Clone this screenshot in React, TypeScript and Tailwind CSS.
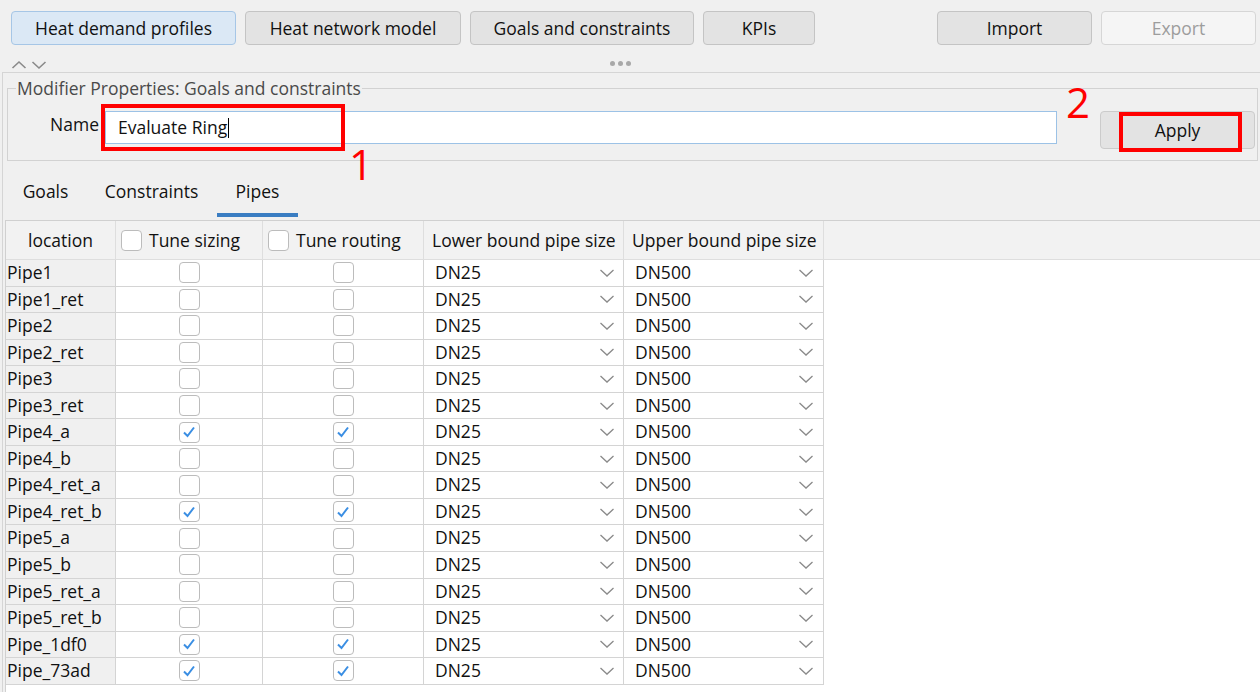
import React from 'react';

type PipeRow = {
  name: string;
  sizing: boolean;
  routing: boolean;
};

const pipes: PipeRow[] = [
  { name: 'Pipe1', sizing: false, routing: false },
  { name: 'Pipe1_ret', sizing: false, routing: false },
  { name: 'Pipe2', sizing: false, routing: false },
  { name: 'Pipe2_ret', sizing: false, routing: false },
  { name: 'Pipe3', sizing: false, routing: false },
  { name: 'Pipe3_ret', sizing: false, routing: false },
  { name: 'Pipe4_a', sizing: true, routing: true },
  { name: 'Pipe4_b', sizing: false, routing: false },
  { name: 'Pipe4_ret_a', sizing: false, routing: false },
  { name: 'Pipe4_ret_b', sizing: true, routing: true },
  { name: 'Pipe5_a', sizing: false, routing: false },
  { name: 'Pipe5_b', sizing: false, routing: false },
  { name: 'Pipe5_ret_a', sizing: false, routing: false },
  { name: 'Pipe5_ret_b', sizing: false, routing: false },
  { name: 'Pipe_1df0', sizing: true, routing: true },
  { name: 'Pipe_73ad', sizing: true, routing: true },
];

const CheckBox = ({ checked }: { checked: boolean }) => (
  <div className="w-[21px] h-[21px] rounded-[4px] border-[1.5px] border-[#bcbcbc] bg-white flex items-center justify-center">
    {checked && (
      <svg width="14" height="14" viewBox="0 0 14 14">
        <polyline points="2,7.5 5.5,11 12,2.5" fill="none" stroke="#3a8ee3" strokeWidth="2" />
      </svg>
    )}
  </div>
);

const Chevron = () => (
  <svg width="16" height="10" viewBox="0 0 16 10">
    <polyline points="1.5,2 8,8 14.5,2" fill="none" stroke="#8a8a8a" strokeWidth="1.3" />
  </svg>
);

const TopButton = ({
  label,
  width,
  selected,
  disabled,
}: {
  label: string;
  width: string;
  selected?: boolean;
  disabled?: boolean;
}) => (
  <button
    className={`${width} h-[34px] rounded-[4px] border text-[17.5px] ${
      selected
        ? 'bg-[#dbe8f5] border-[#a6c6e6] text-[#111]'
        : disabled
        ? 'bg-[#f5f5f5] border-[#d6d6d6] text-[#9d9d9d]'
        : 'bg-[#e3e3e3] border-[#c4c4c4] text-[#111]'
    }`}
  >
    {label}
  </button>
);

const App = () => {
  return (
    <div
      className="w-[1260px] h-[692px] overflow-hidden bg-[#f0f0f0] text-[#111] relative"
      style={{ fontFamily: '"Open Sans", "Noto Sans", sans-serif' }}
    >
      {/* toolbar */}
      <div className="flex items-center pt-[11px] pl-[11px] pr-[4px]">
        <div className="flex gap-[9px]">
          <TopButton label="Heat demand profiles" width="w-[225px]" selected />
          <TopButton label="Heat network model" width="w-[216px]" />
          <TopButton label="Goals and constraints" width="w-[224px]" />
          <TopButton label="KPIs" width="w-[112px]" />
        </div>
        <div className="ml-auto flex gap-[9px]">
          <TopButton label="Import" width="w-[155px]" />
          <TopButton label="Export" width="w-[155px]" disabled />
        </div>
      </div>

      {/* collapse row */}
      <div className="h-[27px] flex items-center relative">
        <div className="flex gap-[4px] ml-[11px] mt-[13px]">
          <svg width="16" height="10" viewBox="0 0 16 10">
            <polyline points="1.5,8 8,2 14.5,8" fill="none" stroke="#8a8a8a" strokeWidth="1.6" />
          </svg>
          <svg width="16" height="10" viewBox="0 0 16 10">
            <polyline points="1.5,2 8,8 14.5,2" fill="none" stroke="#8a8a8a" strokeWidth="1.6" />
          </svg>
        </div>
        <div className="ml-[563px] flex gap-[3px] mt-[9px]">
          <span className="w-[5px] h-[5px] rounded-full bg-[#a8a8a8]" />
          <span className="w-[5px] h-[5px] rounded-full bg-[#a8a8a8]" />
          <span className="w-[5px] h-[5px] rounded-full bg-[#a8a8a8]" />
        </div>
      </div>

      {/* properties panel */}
      <div className="ml-[2px] border-l border-t border-[#d5d5d5] h-[620px]">
        <fieldset className="ml-[4px] mr-[2px] mt-[5px] border border-[#d2d2d2] px-[9px] pb-[11px] pt-[10px] min-w-0">
          <legend className="text-[17.5px] text-[#4a4a4a] px-[1px] leading-[20px] ml-[-1px]">
            Modifier Properties: Goals and constraints
          </legend>
          <div className="flex items-start">
            <span className="w-[88px] text-right text-[17.5px] mt-[3px] pr-[6px]">Name</span>
            <div className="w-[952px] h-[33px] bg-white border border-[#9cc2e6] flex items-center pl-[12px] text-[17.5px] mt-[3px]">
              Evaluate Ring<span className="w-[1px] h-[20px] bg-black ml-[1px]" />
            </div>
            <button className="ml-auto mr-[-7px] w-[155px] h-[38px] rounded-[4px] border border-[#cbcbcb] bg-[#e3e3e3] text-[17.5px] mt-[3px]">
              Apply
            </button>
          </div>
        </fieldset>

        {/* tabs */}
        <div className="flex h-[56px] items-start pl-[2px] pt-[17px] text-[17.5px]">
          <div className="w-[81px] text-center">Goals</div>
          <div className="w-[131px] text-center">Constraints</div>
          <div className="w-[81px] flex flex-col items-center">
            <span>Pipes</span>
            <span className="w-[81px] h-[4px] bg-[#3a7dc2] mt-[9px]" />
          </div>
        </div>

        {/* pipes table */}
        <div className="ml-[2px] mt-[3px] border-l border-t border-[#d0d0d0] bg-white h-[480px] text-[17.5px]">
          <div className="flex h-[39px] bg-[#f2f2f2] border-b border-[#dedede]">
            <div className="w-[110px] flex items-center justify-center border-r border-[#dedede]">location</div>
            <div className="w-[147px] flex items-center gap-[7px] pl-[5px] border-r border-[#dedede]">
              <CheckBox checked={false} />
              <span>Tune sizing</span>
            </div>
            <div className="w-[161px] flex items-center gap-[7px] pl-[5px] border-r border-[#dedede]">
              <CheckBox checked={false} />
              <span>Tune routing</span>
            </div>
            <div className="w-[200px] flex items-center pl-[8px] border-r border-[#dedede]">Lower bound pipe size</div>
            <div className="w-[200px] flex items-center pl-[8px] border-r border-[#dedede]">Upper bound pipe size</div>
          </div>
          {pipes.map((pipe) => (
            <div key={pipe.name} className="flex h-[26.56px] leading-none">
              <div className="w-[110px] bg-[#f0f0f0] border-r border-b border-[#d4d4d4] flex items-center pl-[1px]">
                {pipe.name}
              </div>
              <div className="w-[147px] border-r border-b border-[#d4d4d4] flex items-center justify-center">
                <CheckBox checked={pipe.sizing} />
              </div>
              <div className="w-[161px] border-r border-b border-[#d4d4d4] flex items-center justify-center">
                <CheckBox checked={pipe.routing} />
              </div>
              <div className="w-[200px] border-r border-b border-[#d4d4d4] flex items-center pl-[11px] pr-[8px]">
                <span>DN25</span>
                <span className="ml-auto">
                  <Chevron />
                </span>
              </div>
              <div className="w-[200px] border-r border-b border-[#d4d4d4] flex items-center pl-[11px] pr-[9px]">
                <span>DN500</span>
                <span className="ml-auto">
                  <Chevron />
                </span>
              </div>
            </div>
          ))}
        </div>
      </div>

      {/* annotations */}
      <div className="absolute left-[101px] top-[104px] w-[244px] h-[47px] border-[4px] border-[#ff0000]" />
      <div className="absolute left-[349px] top-[143px] text-[42px] leading-none text-[#ff0000]">1</div>
      <div className="absolute left-[1066px] top-[81px] text-[42px] leading-none text-[#ff0000]">2</div>
      <div className="absolute left-[1119px] top-[112px] w-[123px] h-[40px] border-[4px] border-[#ff0000]" />
    </div>
  );
};

export default App;
